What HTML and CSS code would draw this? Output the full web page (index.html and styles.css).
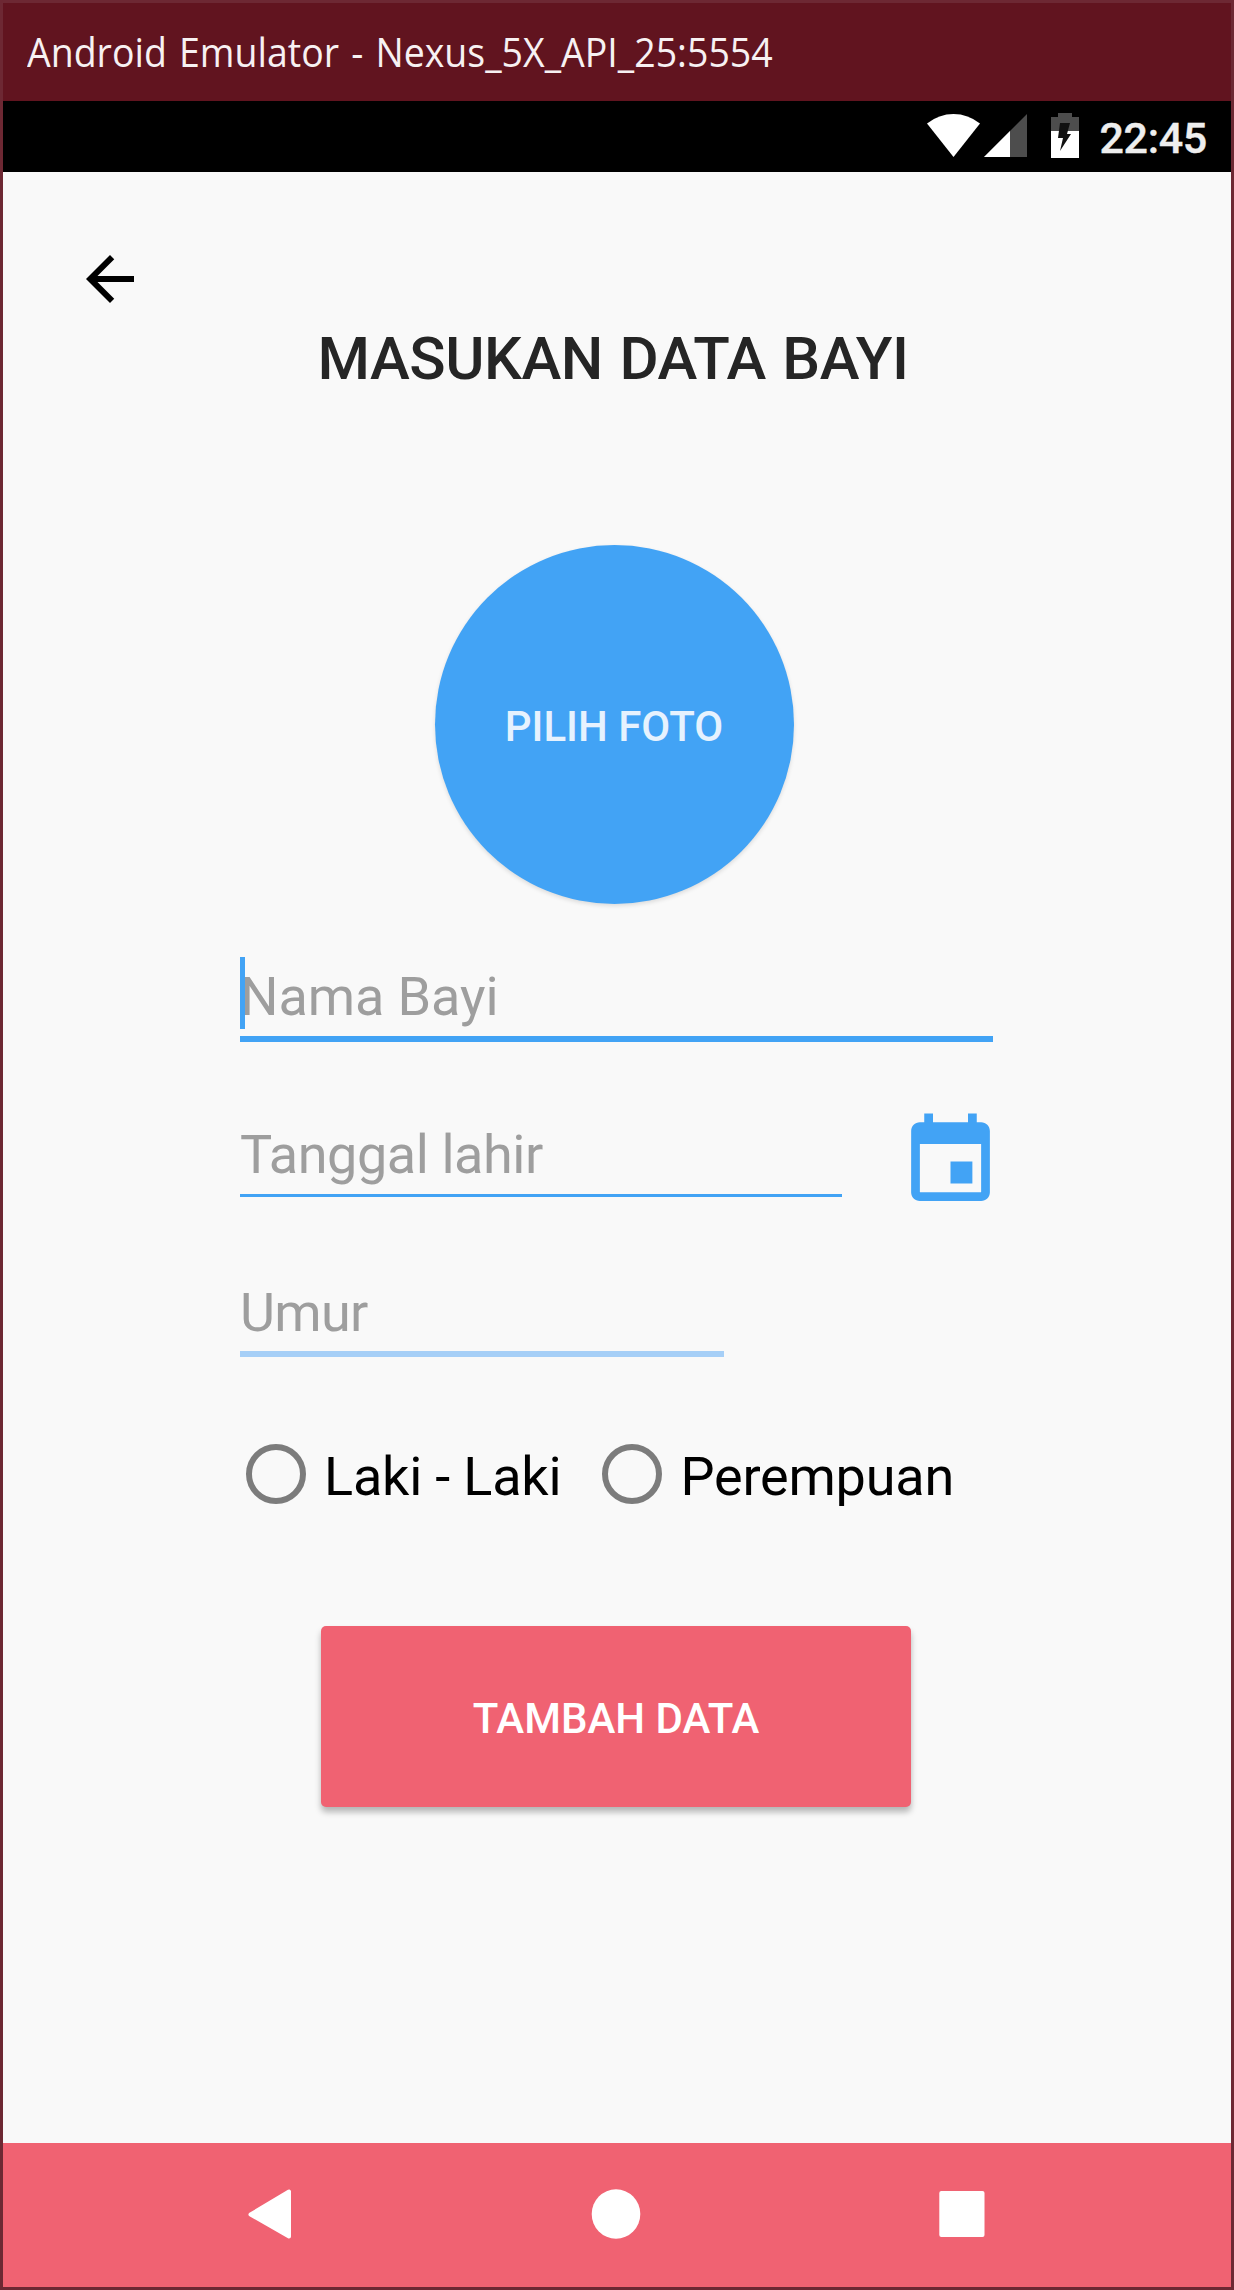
FILE: index.html
```html
<!DOCTYPE html>
<html lang="id">
<head>
<meta charset="utf-8">
<title>Masukan Data Bayi</title>
<link rel="stylesheet" href="styles.css">
</head>
<body>
<div class="window">
  <header class="titlebar"><span class="titlebar-text">Android Emulator - Nexus_5X_API_25:5554</span></header>
  <div class="statusbar">
    <svg class="wifi" width="53" height="43" viewBox="0 0 53 43"><path d="M0 9.5Q12 0 26.500 0T53 9.500L26.500 43z" fill="#fff"/></svg>
    <svg class="signal" width="43" height="43" viewBox="0 0 43 43"><path d="M43 0v43H0z" fill="#4d4d4d"/><path d="M26 17v26H0z" fill="#fff"/></svg>
    <svg class="battery" width="28" height="45" viewBox="0 0 28 45"><path d="M0 4h7V0h14v4h7v14H0z" fill="#4d4d4d"/><path d="M0 18h28v27H0z" fill="#fff"/><path d="M9 10h10l-3 11h4L9 38l3-13H7z" fill="#111"/></svg>
    <span class="clock">22:45</span>
  </div>
  <main class="screen">
    <svg class="back" width="72" height="72" viewBox="0 0 24 24"><path d="M20 11H7.830l5.590-5.590L12 4l-8 8 8 8 1.410-1.410L7.830 13H20v-2z"/></svg>
    <h1 class="heading">MASUKAN DATA BAYI</h1>
    <button class="photo">PILIH FOTO</button>
    <form class="form">
      <div class="field field-name"><span class="caret"></span><span class="hint">Nama Bayi</span></div>
      <div class="date-row">
        <div class="field field-date"><span class="hint">Tanggal lahir</span></div>
        <svg class="calendar" width="105" height="105" viewBox="0 0 24 24"><path d="M17 12h-5v5h5v-5zM16 1v2H8V1H6v2H5c-1.110 0-1.990.9-1.990 2L3 19c0 1.100.89 2 2 2h14c1.100 0 2-.9 2-2V5c0-1.100-.9-2-2-2h-1V1h-2zm3 18H5V8h14v11z"/></svg>
      </div>
      <div class="field field-age"><span class="hint">Umur</span></div>
      <div class="radios">
        <label class="radio"><i class="ring"></i><span class="radio-text">Laki - Laki</span></label>
        <label class="radio"><i class="ring"></i><span class="radio-text">Perempuan</span></label>
      </div>
    </form>
    <button class="submit">TAMBAH DATA</button>
  </main>
  <nav class="navbar">
    <svg width="50" height="50" viewBox="0 0 50 50"><path d="M44 2.500v45L5.500 25.500z" stroke="#fff" stroke-width="4" stroke-linejoin="round"/></svg>
    <svg width="50" height="50" viewBox="0 0 50 50"><ellipse cx="25" cy="25" rx="24.300" ry="24.700"/></svg>
    <svg width="50" height="50" viewBox="0 0 50 50"><rect x="2.300" y="2" width="45.200" height="46" rx="2"/></svg>
  </nav>
</div>
</body>
</html>
```
FILE: styles.css
```css
* { box-sizing: border-box; }
body { margin: 0; font-family: Roboto, "Liberation Sans", sans-serif; }
svg { display: block; flex: none; }
button { border: 0; padding: 0; font: 500 42px/50px Roboto, "Liberation Sans", sans-serif; }
.window {
  display: flex; flex-direction: column;
  width: 1234px; height: 2290px;
  border: 3px solid #6d2833;
  background: #f9f9f9;
}
.titlebar {
  height: 98px; padding-left: 24px;
  background: #61141f; color: #f7f1f2;
  font: 40px/98px "Open Sans", "Noto Sans", sans-serif;
  white-space: nowrap;
}
.titlebar-text { display: inline-block; word-spacing: 2.6px; transform: scaleX(.937); transform-origin: 0 50%; }
.statusbar {
  display: flex; align-items: flex-start;
  height: 71px; padding: 13px 24px 0 0;
  justify-content: flex-end;
  background: #000;
}
.signal { margin-left: 4px; }
.battery { margin: -1px 20px 0 24px; }
.clock { color: #eee; font-size: 43px; font-weight: 500; line-height: 49px; letter-spacing: -.3px; -webkit-text-stroke: .4px #eee; }
.screen { display: flex; flex-direction: column; flex: 1; align-items: center; }
.back { margin: 71px 0 0 71px; align-self: flex-start; fill: #000; }
.heading { margin: 9px 8px 0 0; font-size: 60px; font-weight: 500; line-height: 70px; letter-spacing: -.45px; word-spacing: 2px; color: #252525; }
.photo {
  width: 359px; height: 359px; margin: 151px 6px 0 0;
  padding-top: 4px; border-radius: 50%;
  background: #42a3f5; color: #e6f2fe;
  box-shadow: 0 2px 4px rgba(0, 0, 0, .12);
}
.form { width: 753px; margin: 53px 1px 0 0; }
.field { position: relative; border: 0 solid #42a3f5; color: #9e9e9e; font-size: 54px; line-height: 79px; }
.field-name { border-bottom-width: 6px; }
.field-name .hint { letter-spacing: -.1px; }
.caret { position: absolute; left: 0; top: 0; width: 5px; height: 72px; background: #42a3f5; }
.date-row { display: flex; justify-content: space-between; align-items: flex-start; margin: 66px -10px 0 0; height: 112px; }
.field-date { width: 602px; margin-top: 7px; border-bottom-width: 3px; letter-spacing: -.45px; }
.calendar { margin-top: 1px; fill: #42a3f5; }
.field-age { width: 484px; height: 84px; margin-top: 53px; border-bottom: 6px solid #a6cff7; line-height: 80px; letter-spacing: -.7px; }
.radios { display: flex; gap: 41px; margin: 87px 0 0 6px; }
.radio { display: flex; align-items: center; height: 60px; color: #000; font-size: 54px; line-height: 60px; }
.radio-text { padding-top: 3px; margin-bottom: -3px; letter-spacing: -.2px; }
.ring { flex: none; width: 60px; height: 60px; margin-right: 18px; border: 6px solid #7c7c7c; border-radius: 50%; }
.submit {
  width: 590px; height: 181px; margin: 122px 2px 0 0; padding-top: 4px;
  border-radius: 5px; background: #f06272; color: #fff;
  box-shadow: 0 5px 6px rgba(0, 0, 0, .28);
}
.navbar { display: flex; justify-content: space-between; height: 144px; padding: 46px 244px 0 242px; background: #f06272; }
.navbar svg { fill: #fff; }
```
